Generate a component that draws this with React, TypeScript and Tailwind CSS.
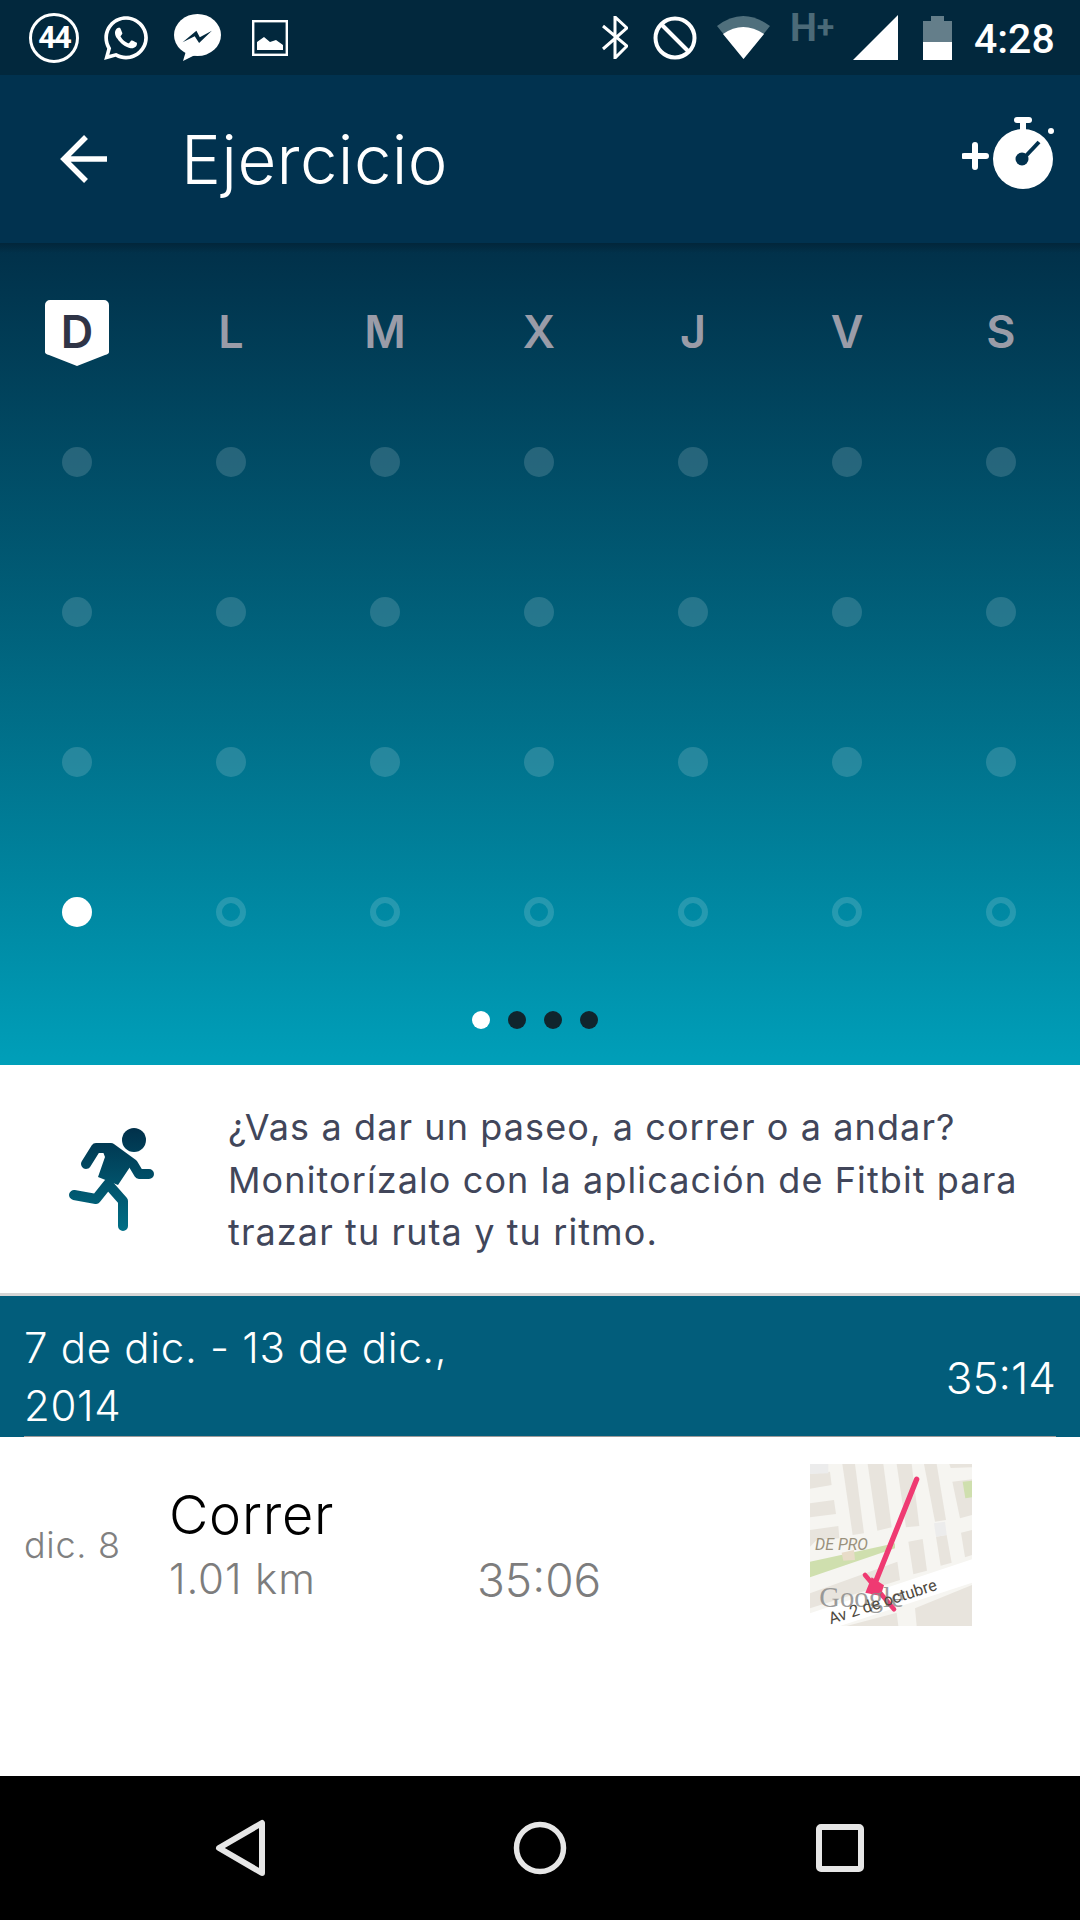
import { FC } from "react";
import { FaWhatsapp } from "react-icons/fa";

const days = ["D", "L", "M", "X", "J", "V", "S"];
const font = { body: "font-['Inter','Liberation_Sans',sans-serif]" };

const Runner: FC = () => (
  <svg viewBox="0 0 170 150" className="w-[170px] h-[150px] shrink-0">
    <defs>
      <linearGradient id="run" gradientUnits="userSpaceOnUse" x1="0" y1="25" x2="0" y2="130">
        <stop offset="0" stopColor="#012f49" />
        <stop offset="1" stopColor="#006f86" />
      </linearGradient>
    </defs>
    <g fill="none" stroke="url(#run)" strokeWidth="10" strokeLinecap="round" strokeLinejoin="round">
      <path d="M56 63 L66 47 H81 L103 63 L109 73 H119" />
      <path d="M44 94 L66 98 L78 83 L93 100 V125" />
    </g>
    <circle cx="104" cy="39" r="12" fill="url(#run)" />
    <path d="M70 43 H82 L104 60 L88 84 L68 76 L75 56Z" fill="url(#run)" />
  </svg>
);

const MapThumb: FC = () => (
  <svg viewBox="90 72 486 486" className="w-[162px] h-[162px] shrink-0 overflow-visible">
    <rect x="90" y="72" width="486" height="486" fill="#f6f5f1" />
    <g fill="#e8e4dd">
      <path d="M90 102 L150 95 L155 135 L90 146Z" />
      <path d="M90 190 L162 180 L168 222 L90 232Z" />
      <path d="M90 270 L175 258 L178 295 L110 300 L90 320Z" />
      <path d="M187 72 H225 L252 280 L218 285Z" />
      <path d="M263 72 H310 L335 262 L292 272Z" />
      <path d="M350 72 H395 L418 258 L378 262Z" />
      <path d="M432 72 H470 L498 240 L465 245Z" />
      <path d="M508 72 H576 V82 L512 84Z" />
      <path d="M517 125 L576 118 V225 L540 235Z" />
      <path d="M385 305 L428 297 L441 392 L400 403Z" />
      <path d="M468 290 L500 285 L515 368 L482 377Z" />
      <path d="M543 278 L576 270 V345 L555 352Z" />
      <path d="M90 460 L352 365 L360 420 L90 505Z" />
      <path d="M405 505 L576 435 V558 H410Z" />
      <path d="M200 558 L350 518 L355 558Z" />
    </g>
    <path d="M90 520 L576 358 V428 L180 558 H90Z" fill="#ffffff" />
    <path d="M90 365 L345 310 V325 L90 412Z" fill="#cfdfae" />
    <path d="M548 125 L576 122 V172 L556 175Z" fill="#cfdfae" />
    <path d="M185 338 L222 330 L225 360 L190 362Z" fill="#e8dcc8" />
    <path d="M90 72 H145 V100 L90 102Z" fill="#ececec" />
    <path d="M462 250 L495 245 L500 285 L468 290Z" fill="#ececec" />
    <text x="105" y="331" fontSize="48" fontStyle="italic" fill="#9a917c" fontFamily="Roboto, sans-serif">DE PRO</text>
    <path d="M410 118 L285 430" stroke="#ef3a72" strokeWidth="16" strokeLinecap="round" fill="none" />
    <path d="M255 405 L342 508" stroke="#ef3a72" strokeWidth="14" strokeLinecap="round" fill="none" />
    <path d="M275 412 L312 436 L302 468 L256 458Z" fill="#ef3a72" />
    <text x="118" y="500" fontSize="86" fill="#8a8a8a" fillOpacity="0.85" fontFamily="'Liberation Serif', serif">Google</text>
    <text x="0" y="0" fontSize="49" fill="#4f4a3f" fontFamily="Roboto, sans-serif" transform="translate(152 553) rotate(-18)">Av 2 de octubre</text>
  </svg>
);

const StatusBar: FC = () => (
  <div className="h-[75px] bg-[#02283d] flex items-center text-white shrink-0">
    <div className="ml-[29px] w-[50px] h-[50px] rounded-full border-[3px] border-white flex items-center justify-center">
      <span className="font-['Roboto',sans-serif] font-bold text-[31px] tracking-[-2px] leading-none">44</span>
    </div>
    <FaWhatsapp className="ml-[22px] w-[50px] h-[50px]" />
    <svg viewBox="0 0 47 47" className="ml-[23px] w-[47px] h-[47px]">
      <ellipse cx="23.5" cy="21" rx="23.5" ry="21" fill="#fff" />
      <path d="M12 37 L9 47 L21 41Z" fill="#fff" />
      <path d="M8.6 28.3 L22.4 16.7 L25.8 23.3 L37.9 16.7 L25.1 29 L20.7 22.3Z" fill="#02283d" />
    </svg>
    <svg viewBox="0 0 36 36" className="ml-[31px] w-[36px] h-[36px]">
      <rect x="1.2" y="1.2" width="33.6" height="33.6" fill="none" stroke="#fff" strokeWidth="2.4" />
      <path d="M5 30 V22 L12 17 L18 22 L24 20 L31 25 V30Z" fill="#fff" />
    </svg>
    <svg viewBox="0 0 26 43" className="ml-[314px] w-[26px] h-[43px]">
      <path d="M1 33 L25 12 L13 1 V42 L25 30 L1 10" fill="none" stroke="#fff" strokeWidth="3" />
    </svg>
    <svg viewBox="0 0 44 44" className="ml-[25px] w-[44px] h-[44px]">
      <circle cx="22" cy="22" r="19.5" fill="none" stroke="#fff" strokeWidth="4" />
      <path d="M8 8 L36 36" stroke="#fff" strokeWidth="4" />
    </svg>
    <svg viewBox="0 0 53 43" className="ml-[20px] w-[53px] h-[43px]">
      <path d="M0 10 Q26 -10 53 10 L26.5 43Z" fill="#4f6f7c" />
      <path d="M6 18 Q26 4 47 18 L26.5 43Z" fill="#fff" />
    </svg>
    <div className="ml-[20px] w-[49px] h-[58px] self-start pt-[9px] font-['Roboto',sans-serif] font-bold text-[38px] leading-none text-[#4b6a78] whitespace-nowrap">
      H<span className="text-[32px] align-[3px]">+</span>
    </div>
    <svg viewBox="0 0 45 45" className="ml-[14px] w-[45px] h-[45px]">
      <path d="M0 45 L45 0 V45Z" fill="#fff" />
    </svg>
    <svg viewBox="0 0 29 44" className="ml-[25px] w-[29px] h-[44px]">
      <path d="M0 5 H8 V0 H21 V5 H29 V26 H0Z" fill="#647e8a" />
      <rect x="0" y="26" width="29" height="18" fill="#fff" />
    </svg>
    <span className="ml-[22px] font-['Roboto',sans-serif] font-medium text-[41px] leading-none mt-[4px]">4:28</span>
  </div>
);

const AppBar: FC = () => (
  <div className="relative h-[168px] bg-[#01324f] flex items-center text-white shrink-0">
    <svg viewBox="0 0 48 48" className="ml-[60px] w-[48px] h-[48px]">
      <path d="M47 24 H4 M26 2 L4 24 L26 46" fill="none" stroke="#fff" strokeWidth="5.5" />
    </svg>
    <span className={`${font.body} ml-[73px] font-light text-[67px] tracking-[0.4px] leading-none`}>Ejercicio</span>
    <svg viewBox="0 0 96 72" className="absolute left-[962px] top-[42px] w-[96px] h-[72px]">
      <path d="M2 39 H24 M13 28 V50" stroke="#fff" strokeWidth="6" strokeLinecap="round" />
      <rect x="52" y="0" width="18" height="6" rx="3" fill="#fff" />
      <rect x="58" y="4" width="6" height="10" fill="#fff" />
      <circle cx="61" cy="42" r="30" fill="#fff" />
      <circle cx="89" cy="14" r="3" fill="#fff" />
      <path d="M61 42 L77 25" stroke="#01324f" strokeWidth="4" />
      <circle cx="60" cy="42" r="6.5" fill="#01324f" />
    </svg>
  </div>
);

const Calendar: FC = () => (
  <div className="relative h-[822px] bg-gradient-to-b from-[#013049] to-[#009fb9] shrink-0 pt-[57px]">
    <div className="absolute top-0 inset-x-0 h-[10px] bg-gradient-to-b from-[#02263a] to-transparent" />
    <div className="grid grid-cols-7 w-[1078px]">
      {days.map((d, i) => (
        <div key={d} className="h-[66px] flex justify-center">
          {i === 0 ? (
            <div className="relative w-[64px] h-[66px] flex items-start justify-center">
              <svg viewBox="0 0 64 66" className="absolute inset-0 w-[64px] h-[66px]">
                <path d="M5 0 H59 A5 5 0 0 1 64 5 V52 Q64 54 60 55 L32 66 L4 55 Q0 54 0 52 V5 A5 5 0 0 1 5 0Z" fill="#fff" />
              </svg>
              <span className={`${font.body} relative font-semibold text-[45px] leading-none mt-[9px] text-[#2f3446]`}>{d}</span>
            </div>
          ) : (
            <span className={`${font.body} font-semibold text-[45px] leading-none mt-[9px] text-[#9a9ca8]`}>{d}</span>
          )}
        </div>
      ))}
    </div>
    <div className="grid grid-cols-7 w-[1078px] gap-y-[120px] mt-[81px]">
      {[0, 1, 2, 3].map((row) =>
        days.map((d, i) => (
          <div key={`${row}${d}`} className="flex justify-center">
            {row < 3 ? (
              <div className="w-[30px] h-[30px] rounded-full bg-white/15" />
            ) : i === 0 ? (
              <div className="w-[30px] h-[30px] rounded-full bg-white" />
            ) : (
              <div className="w-[30px] h-[30px] rounded-full border-[6px] border-white/15" />
            )}
          </div>
        ))
      )}
    </div>
    <div className="flex gap-[18px] ml-[472px] mt-[84px]">
      <div className="w-[18px] h-[18px] rounded-full bg-white" />
      <div className="w-[18px] h-[18px] rounded-full bg-[#10252d]" />
      <div className="w-[18px] h-[18px] rounded-full bg-[#10252d]" />
      <div className="w-[18px] h-[18px] rounded-full bg-[#10252d]" />
    </div>
  </div>
);

const App: FC = () => {
  return (
    <div className={`${font.body} w-[1080px] h-[1920px] flex flex-col bg-white overflow-hidden`}>
      <StatusBar />
      <AppBar />
      <Calendar />

      <div className="h-[228px] flex items-center shrink-0 pt-[2px]">
        <div className="ml-[30px] mr-[28px] -mt-[8px]">
          <Runner />
        </div>
        <p className="text-[36px] tracking-[1.1px] leading-[52.5px] text-[#41465a] whitespace-nowrap">
          ¿Vas a dar un paseo, a correr o a andar?
          <br />
          Monitorízalo con la aplicación de Fitbit para
          <br />
          trazar tu ruta y tu ritmo.
        </p>
      </div>

      <div className="h-[3px] bg-[#d5d5d5] shrink-0" />

      <div className="h-[141px] bg-[#025d7b] text-white px-[24px] shrink-0 flex flex-col">
        <div className="flex-1 flex items-center justify-between">
          <p className="text-[42px] tracking-[0.7px] leading-[58px] w-[480px] pt-[22px] font-light">7 de dic. - 13 de dic., 2014</p>
          <span className="text-[44px] leading-[44px] mt-[24px] font-light">35:14</span>
        </div>
        <div className="h-[1px] bg-[#9a9a9a]" />
      </div>

      <div className="flex-1 flex items-start">
        <span className="ml-[24px] mt-[86px] w-[145px] text-[36px] tracking-[0.7px] leading-[44px] text-[#808080] font-light">dic. 8</span>
        <div className="w-[308px] mt-[39px]">
          <p className="text-[54px] tracking-[0.8px] leading-[78px] text-black font-light">Correr</p>
          <p className="text-[42px] tracking-[0.9px] leading-[50px] text-[#7d7d7d] font-light">1.01 km</p>
        </div>
        <span className="mt-[118px] w-[333px] text-[46px] leading-[50px] text-[#7d7d7d] font-light">35:06</span>
        <div className="mt-[27px]">
          <MapThumb />
        </div>
      </div>

      <div className="h-[144px] bg-black flex items-center justify-center gap-[240px] shrink-0">
        <svg viewBox="0 0 60 60" className="w-[60px] h-[60px]">
          <path d="M9 30 L52 5 V55Z" fill="none" stroke="#e6e6e6" strokeWidth="6" strokeLinejoin="round" />
        </svg>
        <svg viewBox="0 0 60 60" className="w-[60px] h-[60px]">
          <circle cx="30" cy="30" r="23.5" fill="none" stroke="#e6e6e6" strokeWidth="5.5" />
        </svg>
        <svg viewBox="0 0 60 60" className="w-[60px] h-[60px]">
          <rect x="9" y="9" width="42" height="42" rx="2" fill="none" stroke="#e6e6e6" strokeWidth="6" />
        </svg>
      </div>
    </div>
  );
};

export default App;
